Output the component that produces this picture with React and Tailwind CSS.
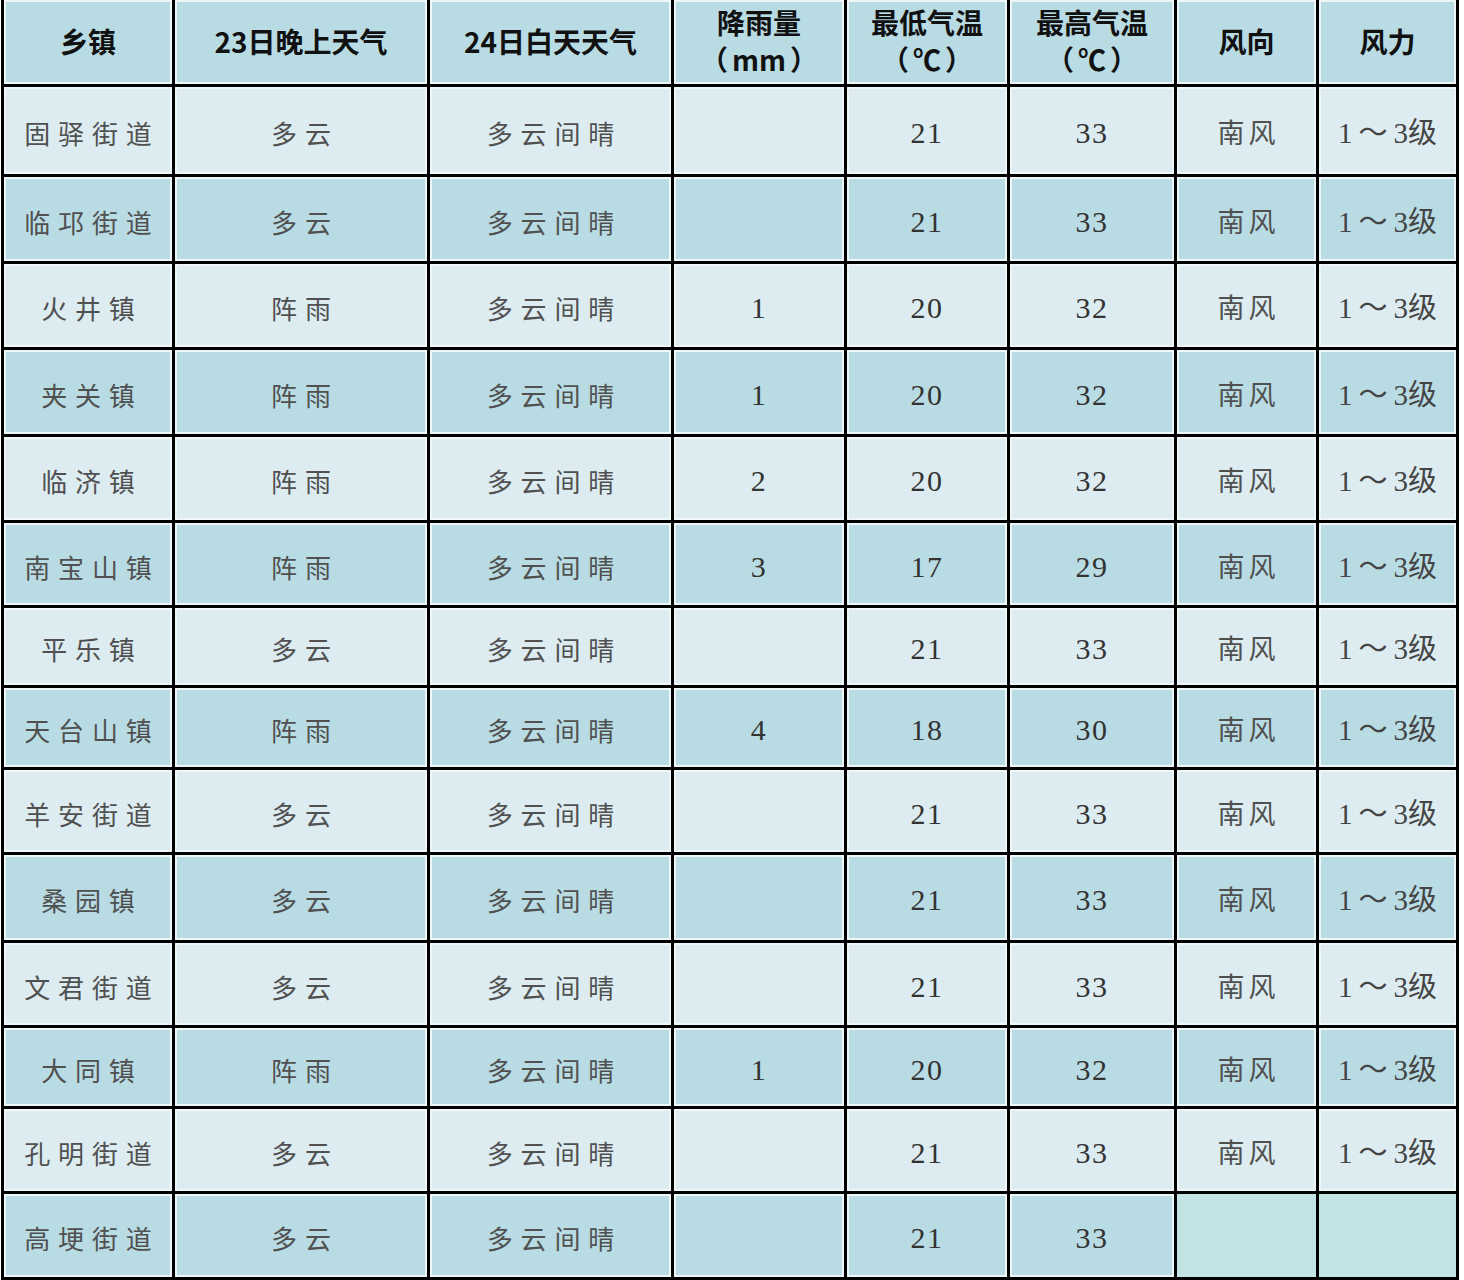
import React from "react";

const cols = ["w-[168px]", "w-[252px]", "w-[241px]", "w-[170px]", "w-[160px]", "w-[164px]", "w-[139px]", "w-[137px]"];

const rows = [
  { h: "h-[87px]", d: false, v: ["固驿街道", "多云", "多云间晴", "", "21", "33", "南风", "1～3级"] },
  { h: "h-[84px]", d: true, v: ["临邛街道", "多云", "多云间晴", "", "21", "33", "南风", "1～3级"] },
  { h: "h-[83px]", d: false, v: ["火井镇", "阵雨", "多云间晴", "1", "20", "32", "南风", "1～3级"] },
  { h: "h-[84px]", d: true, v: ["夹关镇", "阵雨", "多云间晴", "1", "20", "32", "南风", "1～3级"] },
  { h: "h-[83px]", d: false, v: ["临济镇", "阵雨", "多云间晴", "2", "20", "32", "南风", "1～3级"] },
  { h: "h-[82px]", d: true, v: ["南宝山镇", "阵雨", "多云间晴", "3", "17", "29", "南风", "1～3级"] },
  { h: "h-[77px]", d: false, v: ["平乐镇", "多云", "多云间晴", "", "21", "33", "南风", "1～3级"] },
  { h: "h-[79px]", d: true, v: ["天台山镇", "阵雨", "多云间晴", "4", "18", "30", "南风", "1～3级"] },
  { h: "h-[82px]", d: false, v: ["羊安街道", "多云", "多云间晴", "", "21", "33", "南风", "1～3级"] },
  { h: "h-[85px]", d: true, v: ["桑园镇", "多云", "多云间晴", "", "21", "33", "南风", "1～3级"] },
  { h: "h-[82px]", d: false, v: ["文君街道", "多云", "多云间晴", "", "21", "33", "南风", "1～3级"] },
  { h: "h-[78px]", d: true, v: ["大同镇", "阵雨", "多云间晴", "1", "20", "32", "南风", "1～3级"] },
  { h: "h-[82px]", d: false, v: ["孔明街道", "多云", "多云间晴", "", "21", "33", "南风", "1～3级"] },
  { h: "h-[83px]", d: true, v: ["高埂街道", "多云", "多云间晴", "", "21", "33", "", ""] },
];

const Unit = ({ children }) => (
  <span>
    （<span className="mx-[4px]">{children}</span>）
  </span>
);

const header = [
  [<span key="a">乡镇</span>],
  [<span key="a">23日晚上天气</span>],
  [<span key="a">24日白天天气</span>],
  [<span key="a">降雨量</span>, <Unit key="b">mm</Unit>],
  [<span key="a">最低气温</span>, <Unit key="b">℃</Unit>],
  [<span key="a">最高气温</span>, <Unit key="b">℃</Unit>],
  [<span key="a">风向</span>],
  [<span key="a">风力</span>],
];

function Cell({ w, bg, children, blur }) {
  return (
    <div
      className={`${w} shrink-0 flex items-center justify-center border-2 ${
        blur ? "border-[#c5e4e6] bg-[#c3e2e4]" : "border-[#eef6f8] " + bg
      }`}
    >
      {children}
    </div>
  );
}

export default function App() {
  return (
    <div className="w-[1464px] h-[1280px] bg-white">
      <div className="ml-[1px] w-[1458px] bg-black flex flex-col gap-[3px] px-[3px] pb-[3px]">
        <div className="flex gap-[3px] h-[84px]">
          {header.map((lines, i) => (
            <Cell key={i} w={cols[i]} bg="bg-[#b8dbe4]">
              <div className="flex flex-col items-center text-[28px] leading-[37px] font-bold text-[#111] -mt-[2px] font-['Noto_Sans_CJK_SC',sans-serif]">
                {lines}
              </div>
            </Cell>
          ))}
        </div>
        {rows.map((r, ri) => (
          <div key={ri} className={`flex gap-[3px] ${r.h}`}>
            {r.v.map((t, ci) => {
              const bg = r.d ? "bg-[#b9dce4]" : "bg-[#dcecf1]";
              const blur = ri === rows.length - 1 && ci >= 6;
              let content = null;
              if (t) {
                if (ci <= 2) {
                  content = (
                    <span className="mt-[4px] text-[26px] tracking-[0.3em] pl-[0.3em] text-[#505050] font-['Noto_Sans_CJK_SC',sans-serif]">
                      {t}
                    </span>
                  );
                } else if (ci === 6) {
                  content = (
                    <span className="mt-[4px] text-[27px] tracking-[0.15em] pl-[0.15em] text-[#505050] font-['Noto_Sans_CJK_SC',sans-serif]">
                      {t}
                    </span>
                  );
                } else if (ci === 7) {
                  content = (
                    <span className="mt-[4px] text-[29px] text-[#444] whitespace-nowrap font-['Liberation_Serif','Noto_Sans_CJK_SC',serif]">
                      1
                      <span className="mx-[6px] font-['Noto_Sans_CJK_SC',sans-serif]">～</span>3
                      <span className="font-['Noto_Sans_CJK_SC',sans-serif]">级</span>
                    </span>
                  );
                } else {
                  content = (
                    <span className="mt-[4px] text-[30px] tracking-[0.05em] text-[#333] font-['Liberation_Serif','Noto_Sans_CJK_SC',serif]">
                      {t}
                    </span>
                  );
                }
              }
              return (
                <Cell key={ci} w={cols[ci]} bg={bg} blur={blur}>
                  {content}
                </Cell>
              );
            })}
          </div>
        ))}
      </div>
    </div>
  );
}
